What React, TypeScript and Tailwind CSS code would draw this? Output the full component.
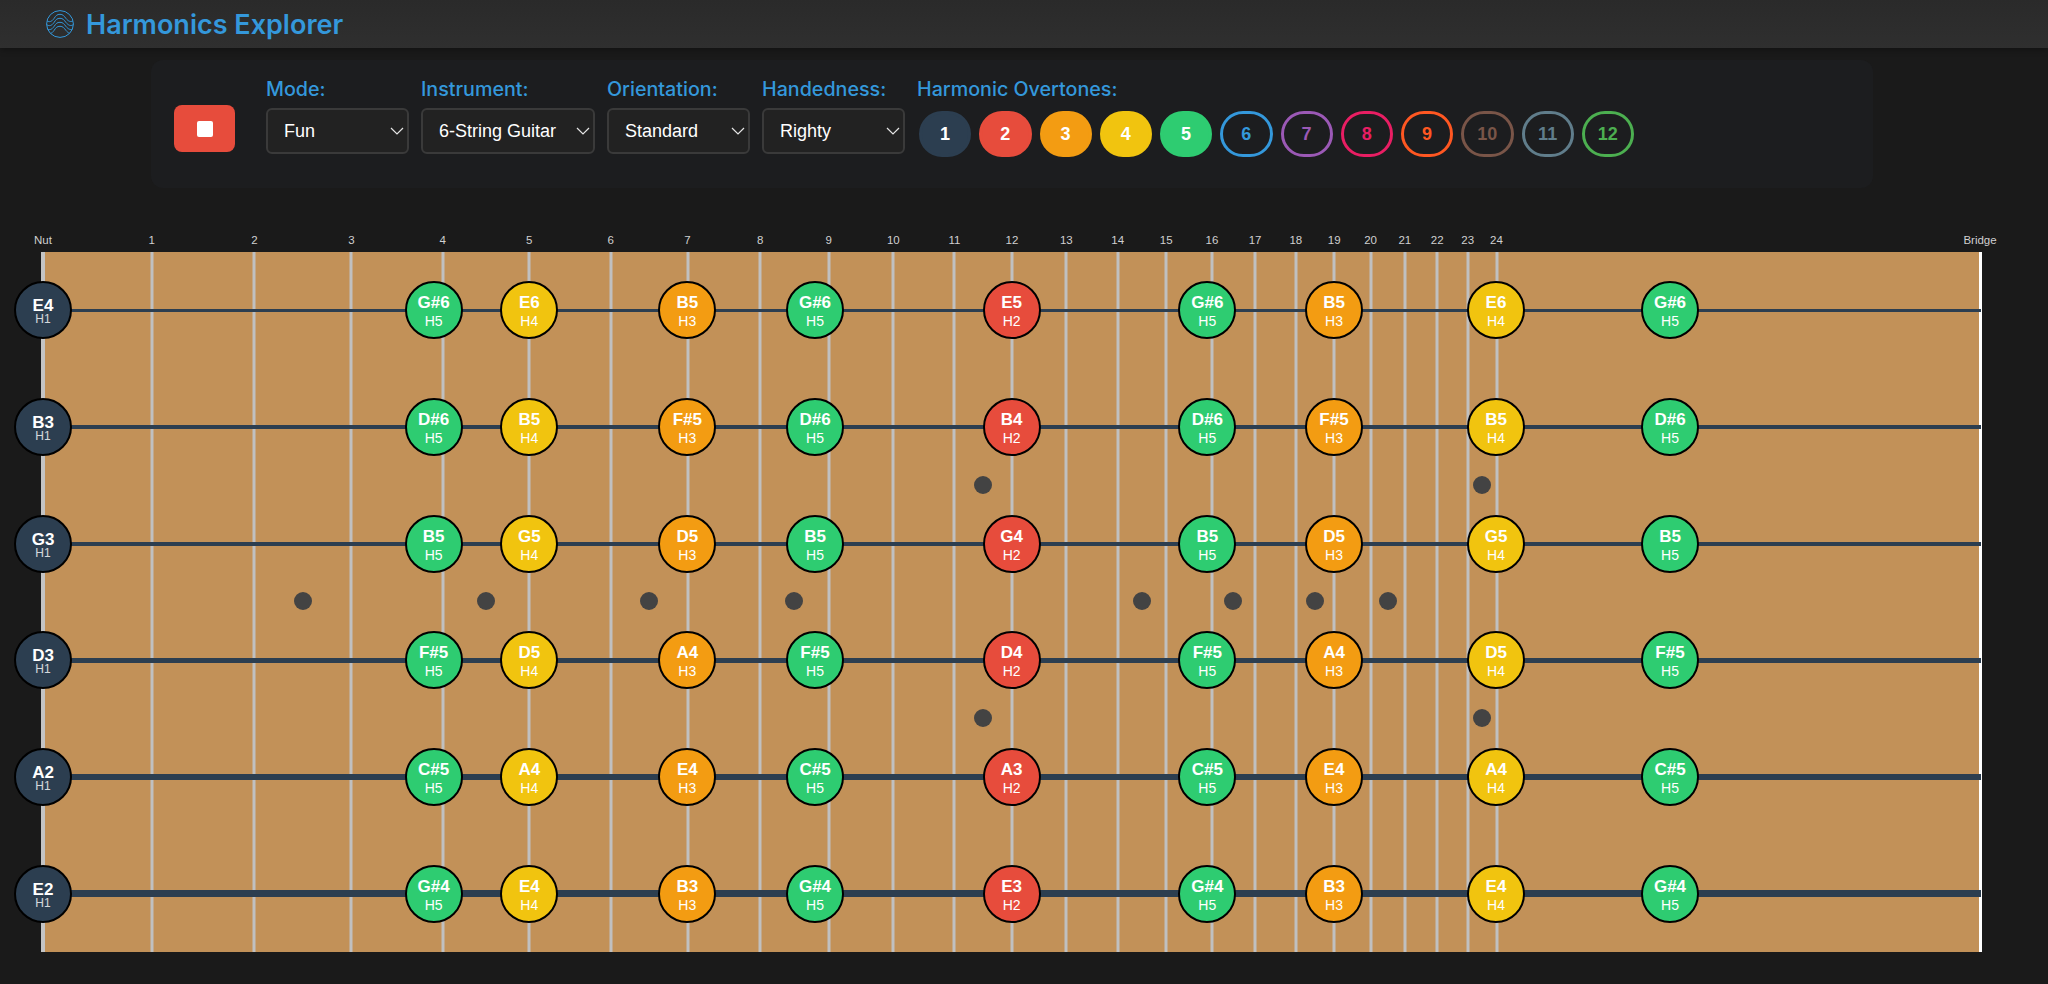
const SANS = "font-['Liberation_Sans',Arial,sans-serif]";

const BOARD_LEFT = 41;
const NUT_X = 43;
const SCALE = 1938;

const fretX = (n: number) => NUT_X + SCALE * (1 - Math.pow(2, -n / 12));
const frets = Array.from({ length: 24 }, (_, i) => i + 1);

// inlays sit halfway between a fret and the one before it; row counts sixths of the board height
const inlays = [
  { fret: 3, row: 3 },
  { fret: 5, row: 3 },
  { fret: 7, row: 3 },
  { fret: 9, row: 3 },
  { fret: 12, row: 2 },
  { fret: 12, row: 4 },
  { fret: 15, row: 3 },
  { fret: 17, row: 3 },
  { fret: 19, row: 3 },
  { fret: 21, row: 3 },
  { fret: 24, row: 2 },
  { fret: 24, row: 4 },
];

const overtones = [
  { n: 1, cls: "bg-[#2c3e50] border-[#2c3e50] text-white" },
  { n: 2, cls: "bg-[#e74c3c] border-[#e74c3c] text-white" },
  { n: 3, cls: "bg-[#f39c12] border-[#f39c12] text-white" },
  { n: 4, cls: "bg-[#f1c40f] border-[#f1c40f] text-white" },
  { n: 5, cls: "bg-[#2ecc71] border-[#2ecc71] text-white" },
  { n: 6, cls: "border-[#3498db] text-[#3498db]" },
  { n: 7, cls: "border-[#9b59b6] text-[#9b59b6]" },
  { n: 8, cls: "border-[#e91e63] text-[#e91e63]" },
  { n: 9, cls: "border-[#ff5722] text-[#ff5722]" },
  { n: 10, cls: "border-[#795548] text-[#795548]" },
  { n: 11, cls: "border-[#607d8b] text-[#607d8b]" },
  { n: 12, cls: "border-[#4caf50] text-[#4caf50]" },
];

const noteX = [433.6, 529.3, 687.3, 815, 1011.7, 1207.3, 1334, 1496, 1670];
const noteH = [5, 4, 3, 5, 2, 5, 3, 4, 5];

const hColor: Record<number, string> = {
  2: "bg-[#e74c3c]",
  3: "bg-[#f39c12]",
  4: "bg-[#f1c40f]",
  5: "bg-[#2ecc71]",
};

const strings = [
  { open: "E4", h: "h-[3px]", notes: ["G#6", "E6", "B5", "G#6", "E5", "G#6", "B5", "E6", "G#6"] },
  { open: "B3", h: "h-[4px]", notes: ["D#6", "B5", "F#5", "D#6", "B4", "D#6", "F#5", "B5", "D#6"] },
  { open: "G3", h: "h-[4px]", notes: ["B5", "G5", "D5", "B5", "G4", "B5", "D5", "G5", "B5"] },
  { open: "D3", h: "h-[5px]", notes: ["F#5", "D5", "A4", "F#5", "D4", "F#5", "A4", "D5", "F#5"] },
  { open: "A2", h: "h-[6px]", notes: ["C#5", "A4", "E4", "C#5", "A3", "C#5", "E4", "A4", "C#5"] },
  { open: "E2", h: "h-[7px]", notes: ["G#4", "E4", "B3", "G#4", "E3", "G#4", "B3", "E4", "G#4"] },
];

function Logo() {
  return (
    <svg width="28" height="28" viewBox="0 0 28 28" fill="none" stroke="#3498db" strokeWidth="1" className="shrink-0">
      <defs>
        <clipPath id="logo-clip">
          <circle cx="14" cy="14" r="13.4" />
        </clipPath>
      </defs>
      <circle cx="14" cy="14" r="13.4" />
      <g clipPath="url(#logo-clip)">
        <path d="M0 10C3 13 6 11.5 8 8.5S11 4.3 14 4.3 18 6 20 8.5 25 13 28 10" />
        <path d="M0 14C3 17 6 15.5 8 12.5S11 8.3 14 8.3 18 10 20 12.5 25 17 28 14" />
        <path d="M0 18C3 21 6 19.5 8 16.5S11 12.3 14 12.3 18 14 20 16.5 25 21 28 18" />
        <path d="M0 22C3 25 6 23.5 8 20.5S11 16.3 14 16.3 18 18 20 20.5 25 25 28 22" />
      </g>
    </svg>
  );
}

function Picker({ label, value, options, width }: { label: string; value: string; options: string[]; width: string }) {
  return (
    <div className="flex flex-col gap-[7px]">
      <label className="font-['Inter',sans-serif] text-[19.7px] leading-[23px] font-medium text-[#3498db] whitespace-nowrap">{label}</label>
      <div className={`relative h-[46px] ${width}`}>
        <select
          defaultValue={value}
          className={`${SANS} h-full w-full appearance-none rounded-[6px] border-2 border-[#3a3a3a] bg-[#222222] pl-[16px] text-[18px] text-white outline-none`}
        >
          {options.map((o) => (
            <option key={o}>{o}</option>
          ))}
        </select>
        <svg width="14" height="8" viewBox="0 0 14 8" fill="none" stroke="#e5e5e5" strokeWidth="1.2" className="absolute right-[5px] top-[19px]">
          <path d="M1 1l6 6 6-6" />
        </svg>
      </div>
    </div>
  );
}

function Note({ x, name, h, open }: { x: number; name: string; h: number; open?: boolean }) {
  return (
    <div
      className={`${SANS} absolute top-1/2 flex h-[58px] w-[58px] -translate-x-1/2 -translate-y-1/2 flex-col items-center justify-center rounded-full border-2 border-black pt-[2px] text-white ${
        open ? "bg-[#2c3e50]" : hColor[h]
      }`}
      style={{ left: x - BOARD_LEFT }}
    >
      <span className="text-[17px] leading-none font-bold">{name}</span>
      <span className={open ? "-mt-[1px] text-[12px] leading-none opacity-80" : "mt-[3px] text-[14px] leading-none"}>H{h}</span>
    </div>
  );
}

export default function App() {
  return (
    <div className="min-h-[984px] overflow-hidden bg-[#1a1a1a]">
      <header className="flex h-12 items-center gap-[12px] bg-gradient-to-b from-[#2a2a2a] to-[#2f2f2f] pl-[46px] shadow-[0_2px_6px_rgba(0,0,0,0.3)]">
        <Logo />
        <h1 className="font-['Inter',sans-serif] text-[27px] leading-none font-semibold text-[#3498db]">Harmonics Explorer</h1>
      </header>

      <div className="ml-[151px] mt-[12px] flex h-[128px] w-[1722px] gap-[12px] rounded-[12px] bg-[#1c1d1f] pl-[23px] pt-[18px]">
        <button className="mr-[19px] mt-[27px] flex h-[47px] w-[61px] items-center justify-center rounded-[8px] bg-[#e74c3c]">
          <span className="block h-4 w-4 rounded-[2px] bg-white" />
        </button>

        <Picker label="Mode:" value="Fun" options={["Fun", "Study"]} width="w-[143px]" />
        <Picker label="Instrument:" value="6-String Guitar" options={["6-String Guitar", "7-String Guitar", "Bass"]} width="w-[174px]" />
        <Picker label="Orientation:" value="Standard" options={["Standard", "Flipped"]} width="w-[143px]" />
        <Picker label="Handedness:" value="Righty" options={["Righty", "Lefty"]} width="w-[143px]" />

        <div className="flex flex-col">
          <span className="font-['Inter',sans-serif] text-[19.7px] leading-[23px] font-medium text-[#3498db] whitespace-nowrap">Harmonic Overtones:</span>
          <div className="ml-[2px] mt-[10px] flex gap-[8px]">
            {overtones.map((o) => (
              <button
                key={o.n}
                className={`${SANS} flex h-[46px] w-[52.25px] items-center justify-center rounded-full border-[3px] text-[18px] font-bold ${o.cls}`}
              >
                {o.n}
              </button>
            ))}
          </div>
        </div>
      </div>

      <div className="relative ml-[41px] mt-[64px] h-[700px] w-[1941px] bg-[#c29158]">
        {/* fret numbers above the board */}
        <span className={`${SANS} absolute -top-[18px] -translate-x-1/2 text-[11.5px] leading-[12px] text-[#d0d0d0]`} style={{ left: NUT_X - BOARD_LEFT }}>
          Nut
        </span>
        {frets.map((n) => (
          <span
            key={n}
            className={`${SANS} absolute -top-[18px] -translate-x-1/2 text-[11.5px] leading-[12px] text-[#d0d0d0]`}
            style={{ left: fretX(n) - BOARD_LEFT }}
          >
            {n}
          </span>
        ))}
        <span className={`${SANS} absolute -top-[18px] -translate-x-1/2 text-[11.5px] leading-[12px] text-[#d0d0d0]`} style={{ left: 1939 }}>
          Bridge
        </span>

        {/* nut, frets, bridge */}
        <div className="absolute inset-y-0 left-0 w-[4px] bg-[#c4c4c4]" />
        {frets.map((n) => (
          <div key={n} className="absolute inset-y-0 w-[3px] -translate-x-1/2 bg-[#c0c0c0]" style={{ left: fretX(n) - BOARD_LEFT }} />
        ))}
        <div className="absolute inset-y-0 right-0 w-[3px] bg-white" />

        {inlays.map((d) => (
          <div
            key={`${d.fret}-${d.row}`}
            className="absolute h-[18px] w-[18px] -translate-x-1/2 -translate-y-1/2 rounded-full bg-[#434343]"
            style={{ left: (fretX(d.fret) + fretX(d.fret - 1)) / 2 - BOARD_LEFT, top: (700 * d.row) / 6 - 0.7 }}
          />
        ))}

        {/* one row per string */}
        <div className="relative flex h-full flex-col">
          {strings.map((s) => (
            <div key={s.open} className="relative flex flex-1 items-center pl-[2px] pr-[1px]">
              <div className={`w-full ${s.h} bg-[#2c3e50]`} />
              <Note x={NUT_X} name={s.open} h={1} open />
              {s.notes.map((name, i) => (
                <Note key={i} x={noteX[i]} name={name} h={noteH[i]} />
              ))}
            </div>
          ))}
        </div>
      </div>
    </div>
  );
}
